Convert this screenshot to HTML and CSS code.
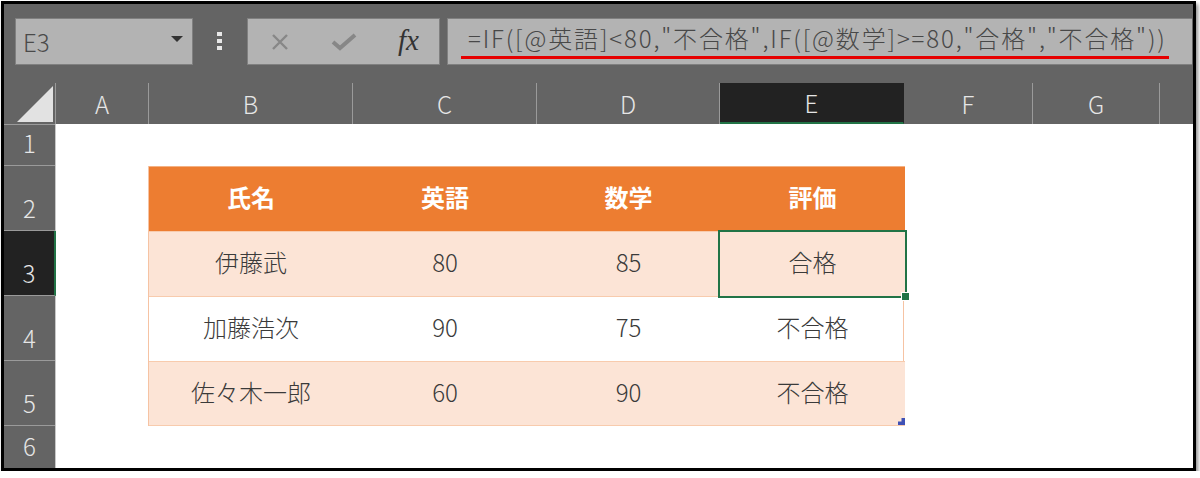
FILE: index.html
```html
<!DOCTYPE html>
<html lang="ja">
  <head>
    <meta charset="UTF-8" />
    <meta name="viewport" content="width=device-width, initial-scale=1.0" />
    <title>IF関数 - 評価</title>
    <link rel="stylesheet" href="styles.css">
  </head>
  <body>
    <div class="frame">
      <!-- formula bar -->
      <div class="toolbar">
        <div class="name-box">
          <span class="cell-ref">E3</span>
          <span class="caret"></span>
        </div>
        <div class="grip">
          <span></span><span></span><span></span>
        </div>
        <div class="btn-box">
          <svg class="icon" width="22" height="16" viewBox="0 0 22 16">
            <path d="M4 1 L18 15 M18 1 L4 15" stroke="#878787" stroke-width="2.4" fill="none" />
          </svg>
          <svg class="icon" width="26" height="18" viewBox="0 0 26 18">
            <path d="M2 9 L9 15 L24 2" stroke="#878787" stroke-width="4" fill="none" />
          </svg>
          <span class="fx">fx</span>
        </div>
        <div class="formula-box">
          <span class="formula">=IF([@英語]&lt;80,"不合格",IF([@数学]&gt;=80,"合格","不合格"))</span>
        </div>
      </div>

      <!-- column headings -->
      <div class="col-heads">
        <div class="corner">
          <svg width="36" height="36" viewBox="0 0 36 36">
            <polygon points="36,0 36,36 0,36" fill="#e2e2e2" />
          </svg>
        </div>
        <div class="col-head col-a">A</div>
        <div class="col-head col-b">B</div>
        <div class="col-head col-c">C</div>
        <div class="col-head col-d">D</div>
        <div class="col-head col-e active">E</div>
        <div class="col-head col-f">F</div>
        <div class="col-head col-g">G</div>
        <div class="col-head col-h"></div>
      </div>

      <div class="sheet">
        <div class="row-heads">
          <div class="row-head short">1</div>
          <div class="row-head">2</div>
          <div class="row-head active">3</div>
          <div class="row-head">4</div>
          <div class="row-head">5</div>
          <div class="row-head rest">6</div>
        </div>

        <div class="cells">
          <div class="table">
            <div class="th">氏名</div>
            <div class="th">英語</div>
            <div class="th">数学</div>
            <div class="th">評価</div>

            <div class="td band">伊藤武</div>
            <div class="td band">80</div>
            <div class="td band">85</div>
            <div class="td band selected">合格</div>

            <div class="td">加藤浩次</div>
            <div class="td">90</div>
            <div class="td">75</div>
            <div class="td">不合格</div>

            <div class="td band last">佐々木一郎</div>
            <div class="td band last">60</div>
            <div class="td band last">90</div>
            <div class="td band last resize">不合格</div>
          </div>
        </div>
      </div>
    </div>
  </body>
</html>
```

FILE: styles.css
```css
body {
  margin: 0;
  background: #fff;
  font-family: "Noto Sans CJK JP", "Noto Sans", sans-serif;
}

.frame {
  box-sizing: border-box;
  width: 1195px;
  height: 470px;
  margin: 1px 0 0 1px;
  border: 3px solid #000;
  box-shadow: 2px 3px 4px rgba(0, 0, 0, 0.45);
  background: #fff;
  display: flex;
  flex-direction: column;
  overflow: hidden;
}

/* formula bar */
.toolbar {
  height: 79px;
  flex: none;
  display: flex;
  align-items: flex-start;
  padding: 14px 1px 0 11px;
  box-sizing: border-box;
  background: #646464;
}
.name-box {
  box-sizing: border-box;
  width: 178px;
  height: 47px;
  background: #b3b3b3;
  border: 1px solid #808080;
  display: flex;
  align-items: center;
  justify-content: space-between;
  padding: 0 9px 0 7px;
}
.cell-ref {
  font-size: 24px;
  font-weight: 300;
  color: #4a4a4a;
  line-height: 1;
}
.caret {
  width: 0;
  height: 0;
  border-left: 6px solid transparent;
  border-right: 6px solid transparent;
  border-top: 6px solid #333;
  margin-bottom: 5px;
}
.grip {
  width: 6px;
  margin: 14px 24px 0 24px;
  display: flex;
  flex-direction: column;
  gap: 3px;
}
.grip span {
  width: 5px;
  height: 4px;
  background: #e8e8e8;
}
.btn-box {
  box-sizing: border-box;
  width: 193px;
  height: 47px;
  background: #b3b3b3;
  border: 1px solid #808080;
  display: flex;
  align-items: center;
  padding: 0 20px 0 21px;
  gap: 40px;
}
.icon {
  display: block;
}
.fx {
  font-family: "Liberation Serif", serif;
  font-style: italic;
  font-size: 29px;
  color: #333;
  line-height: 1;
  margin-left: 1px;
  margin-bottom: 3px;
}
.formula-box {
  box-sizing: border-box;
  flex: 1;
  height: 47px;
  margin-left: 7px;
  background: #b3b3b3;
  border: 1px solid #808080;
  border-right: none;
  padding: 4px 0 0 13px;
}
.formula {
  display: inline-block;
  font-size: 24px;
  font-weight: 300;
  letter-spacing: 1.85px;
  line-height: 30px;
  color: #484848;
  padding: 0 2px 3px 7px;
  border-bottom: 3px solid #e60000;
  white-space: nowrap;
}

/* column headings */
.col-heads {
  height: 41px;
  flex: none;
  display: flex;
  background: #646464;
}
.corner,
.col-head {
  box-sizing: border-box;
  border-right: 1px solid #9a9a9a;
  flex: none;
}
.corner {
  width: 52px;
  display: flex;
  align-items: flex-end;
  justify-content: flex-end;
  padding: 0 2px 2px 0;
}
.corner svg {
  display: block;
}
.col-head {
  display: flex;
  align-items: center;
  justify-content: center;
  font-size: 24px;
  font-weight: 300;
  color: #e6e6e6;
}
.col-a { width: 93px; }
.col-b { width: 204px; }
.col-c { width: 184px; }
.col-d { width: 183px; }
.col-e { width: 184px; }
.col-f { width: 129px; }
.col-g { width: 127px; }
.col-h { flex: 1; border-right: none; }
.col-head.active {
  background: #222;
  border-bottom: 2px solid #217346;
  border-right-color: #222;
}

/* sheet */
.sheet {
  flex: 1;
  display: flex;
  min-height: 0;
}
.row-heads {
  width: 52px;
  flex: none;
  display: flex;
  flex-direction: column;
  background: #646464;
  border-right: 1px solid #c8c8c8;
  box-sizing: border-box;
}
.row-head {
  box-sizing: border-box;
  height: 65px;
  flex: none;
  display: flex;
  align-items: flex-end;
  justify-content: center;
  padding-bottom: 5px;
  border-bottom: 1px solid #9a9a9a;
  font-size: 24px;
  font-weight: 300;
  line-height: 34px;
  color: #e6e6e6;
}
.row-head.short {
  height: 42px;
  border-top: 1px solid #9a9a9a;
}
.row-head.rest {
  flex: 1;
  border-bottom: none;
}
.row-head.active {
  background: #222;
  border-right: 2px solid #217346;
  margin-right: -1px;
}

.cells {
  flex: 1;
  padding: 42px 0 0 92px;
}
.table {
  display: grid;
  grid-template-columns: 204px 184px 183px 185px;
  grid-auto-rows: 65px;
  width: 756px;
  border-left: 1px solid #f6c3a3;
  border-right: 1px solid #f6c3a3;
  box-sizing: border-box;
}
.th,
.td {
  display: flex;
  align-items: center;
  justify-content: center;
  font-size: 24px;
  padding-bottom: 5px;
  box-sizing: border-box;
}
.th {
  background: #ed7d31;
  color: #fff;
  font-weight: 700;
  border-top: 1px solid #f4b183;
}
.td {
  color: #3a3a3a;
  font-weight: 300;
  border-top: 1px solid #f8cbad;
}
.td.band {
  background: #fce4d6;
}
.td.last {
  border-bottom: 1px solid #f8cbad;
}

/* active cell E3 */
.td.selected {
  position: relative;
}
.td.selected::before {
  content: "";
  position: absolute;
  left: -2px;
  top: -2px;
  right: -2px;
  bottom: -2px;
  border: 2px solid #217346;
}
.td.selected::after {
  content: "";
  position: absolute;
  right: -5px;
  bottom: -5px;
  width: 7px;
  height: 7px;
  background: #217346;
  border: 1px solid #fff;
  box-sizing: content-box;
}

/* table resize handle */
.td.resize {
  position: relative;
}
.td.resize::after {
  content: "";
  position: absolute;
  right: 0;
  bottom: 0;
  width: 7px;
  height: 7px;
  background: #3f51b5;
  clip-path: polygon(100% 0, 100% 100%, 0 100%, 0 50%, 50% 50%, 50% 0);
}
```
